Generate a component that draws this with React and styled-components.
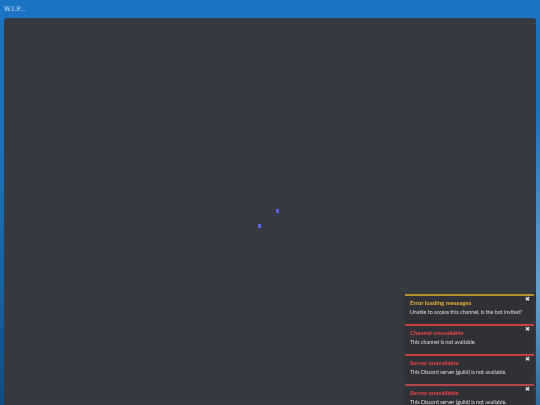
import React from 'react';
import styled, { createGlobalStyle } from 'styled-components';

const GlobalStyle = createGlobalStyle`
  html, body {
    margin: 0;
    padding: 0;
    height: 100%;
  }
  body {
    font-family: Lato, "Noto Sans", sans-serif;
    background:
      radial-gradient(ellipse 140px 260px at 545px 290px, rgba(180, 215, 240, 0.55), rgba(180, 215, 240, 0) 70%),
      linear-gradient(180deg, #1b74c2 0%, #1a6fb8 45%, #145e9c 75%, #0f4e86 100%);
    overflow: hidden;
  }
  #root {
    height: 100%;
  }
`;

const Page = styled.div`
  display: flex;
  flex-direction: column;
  height: 100%;
`;

const TitleBar = styled.div`
  height: 18px;
  display: flex;
  align-items: center;
  padding: 0 4px;
  color: #dbe9f7;
  font-family: "DejaVu Serif", serif;
  font-size: 6.5px;
  flex-shrink: 0;
`;

const Panel = styled.main`
  flex: 1;
  margin: 0 4px;
  background: #36393f;
  border-radius: 3px 3px 0 0;
  display: flex;
  align-items: center;
  justify-content: center;
`;

const Spinner = styled.div`
  position: relative;
  width: 22px;
  height: 19px;
  margin: 14px 0 0 -3px;
`;

const Cube = styled.span`
  position: absolute;
  width: 3.5px;
  height: 3.5px;
  background: #5865f2;
  left: ${(p) => p.$x}px;
  top: ${(p) => p.$y}px;
`;

const Toasts = styled.div`
  position: fixed;
  top: 294px;
  right: 6px;
  width: 129px;
  display: flex;
  flex-direction: column;
  gap: 3px;
`;

const Toast = styled.div`
  position: relative;
  background: #2f3136;
  border-top: 2px solid ${(p) => p.$border};
  padding: 2px 5px 4px 5px;
  box-shadow: 0 1px 3px rgba(0, 0, 0, 0.25);
`;

const ToastTitle = styled.div`
  font-size: 6px;
  font-weight: 700;
  color: ${(p) => p.$color};
  line-height: 9px;
`;

const ToastBody = styled.div`
  font-size: 5.3px;
  color: #dcddde;
  line-height: 10px;
`;

const Close = styled.span`
  position: absolute;
  top: 1px;
  right: 4px;
  font-size: 5.5px;
  color: #e8e8e8;
  line-height: 1;
`;

const toasts = [
  {
    title: 'Error loading messages',
    body: 'Unable to access this channel, is the bot invited?',
    color: '#f0b232',
    border: '#b8922e',
  },
  {
    title: 'Channel unavailable',
    body: 'This channel is not available.',
    color: '#f04747',
    border: '#c9403f',
  },
  {
    title: 'Server unavailable',
    body: 'This Discord server (guild) is not available.',
    color: '#f04747',
    border: '#c9403f',
  },
  {
    title: 'Server unavailable',
    body: 'This Discord server (guild) is not available.',
    color: '#f04747',
    border: '#b04646',
  },
];

const App = () => (
  <Page>
    <GlobalStyle />
    <TitleBar>W.I.P...</TitleBar>
    <Panel>
      <Spinner>
        <Cube $x={18} $y={0} />
        <Cube $x={0} $y={15} />
      </Spinner>
    </Panel>
    <Toasts>
      {toasts.map((t, i) => (
        <Toast key={i} $border={t.border}>
          <Close>✖</Close>
          <ToastTitle $color={t.color}>{t.title}</ToastTitle>
          <ToastBody>{t.body}</ToastBody>
        </Toast>
      ))}
    </Toasts>
  </Page>
);

export default App;
